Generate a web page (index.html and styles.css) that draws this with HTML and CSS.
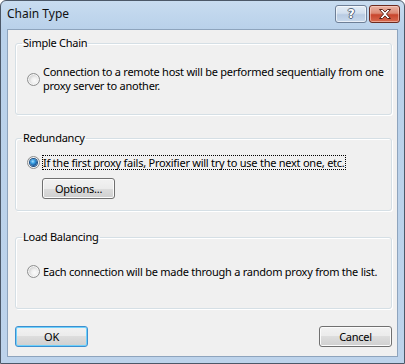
FILE: index.html
```html
<!DOCTYPE html>
<html lang="en">
<head>
    <meta charset="UTF-8">
    <meta name="viewport" content="width=device-width, initial-scale=1.0">
    <title>Chain Type</title>
    <link rel="stylesheet" href="styles.css">
</head>
<body>
    <div class="window">
        <div class="titlebar">
            <span class="title">Chain Type</span>
            <div class="caption-buttons">
                <span class="cap-btn help"><span class="help-glyph">?</span></span>
                <span class="cap-btn close">
                    <svg width="14" height="10" viewBox="0 0 14 10">
                        <path d="M1.5 0.5h3l2.5 2.6 2.5-2.6h3l-4 4.5 4 4.5h-3l-2.5-2.6-2.5 2.6h-3l4-4.5z" fill="#fff" stroke="#5a2317" stroke-width="1" stroke-linejoin="round"/>
                    </svg>
                </span>
            </div>
        </div>

        <div class="client">
            <fieldset class="group group-simple">
                <legend>Simple Chain</legend>
                <label class="option">
                    <span class="radio"></span>
                    <span class="option-text multi">Connection to a remote host will be performed sequentially from one<br>proxy server to another.</span>
                </label>
            </fieldset>

            <fieldset class="group group-redundancy">
                <legend>Redundancy</legend>
                <label class="option">
                    <span class="radio checked"></span>
                    <span class="option-text focused">If the first proxy fails, Proxifier will try to use the next one, etc.</span>
                </label>
                <button class="btn options-btn">Options...</button>
            </fieldset>

            <fieldset class="group group-balance">
                <legend>Load Balancing</legend>
                <label class="option">
                    <span class="radio"></span>
                    <span class="option-text">Each connection will be made through a random proxy from the list.</span>
                </label>
            </fieldset>

            <div class="dialog-buttons">
                <button class="btn default">OK</button>
                <button class="btn">Cancel</button>
            </div>
        </div>
    </div>
</body>
</html>
```

FILE: styles.css
```css
* {
    box-sizing: border-box;
}
body {
    margin: 0;
    background-color: #ffffff;
    font-family: "Noto Sans", sans-serif;
    font-size: 11px;
    letter-spacing: -0.25px;
    color: #000000;
}
.window {
    width: 405px;
    height: 364px;
    border: 1px solid #4c5868;
    border-radius: 6px 6px 0 0;
    background: linear-gradient(#c8dcf0, #b9d1ea 28px, #bdd3eb);
    display: flex;
    flex-direction: column;
}
.titlebar {
    height: 28px;
    flex: none;
    display: flex;
    justify-content: space-between;
    padding: 0 4px 0 6px;
}
.title {
    font-size: 12px;
    letter-spacing: 0;
    line-height: 16px;
    margin-top: 5px;
    color: #111111;
}
.caption-buttons {
    display: flex;
    gap: 2px;
    margin-top: 4px;
}
.cap-btn {
    height: 18px;
    display: flex;
    align-items: center;
    justify-content: center;
    border-radius: 3px;
}
.help {
    width: 32px;
    border: 1px solid #6e7f97;
    background: linear-gradient(#e4edf7, #d2dfee 45%, #b8cbe2 55%, #c9d9ec);
    box-shadow: inset 0 0 0 1px rgba(255, 255, 255, 0.6);
}
.help-glyph {
    font-family: "DejaVu Sans", sans-serif;
    font-weight: bold;
    font-size: 12px;
    line-height: 12px;
    color: #ffffff;
    text-shadow: -1px 0 #55657a, 1px 0 #55657a, 0 -1px #55657a, 0 1px #55657a;
}
.close {
    width: 31px;
    border: 1px solid #6c2a1f;
    background: linear-gradient(#eab3a5, #dc8a74 45%, #c8462d 55%, #d86a4f);
    box-shadow: inset 0 0 0 1px rgba(255, 220, 210, 0.5);
}
.client {
    flex: 1;
    min-height: 0;
    margin: 0 6px 6px;
    background-color: #f0f0f0;
    border: 1px solid #8ea4bd;
    padding: 5px 5px 0 7px;
    display: flex;
    flex-direction: column;
}
.group {
    margin: 0;
    padding: 0;
    border: 1px solid #d5dfe5;
    border-radius: 3px;
    box-shadow: inset 1px 1px 0 #ffffff, 1px 1px 0 #ffffff;
}
.group legend {
    margin-left: 6px;
    padding: 0 1px;
    line-height: 16px;
}
.group-simple {
    padding: 14px 0 21px;
}
.group-redundancy {
    margin-top: 15px;
    padding: 10px 0 11px;
}
.group-balance {
    margin-top: 18px;
    padding: 20px 0 30px;
}
.option {
    display: flex;
    align-items: center;
    gap: 3px;
    margin-left: 11px;
    line-height: 13px;
}
.option-text {
    white-space: nowrap;
}
.option-text.multi {
    line-height: 14px;
}
.radio {
    position: relative;
    flex: none;
    width: 13px;
    height: 13px;
    border-radius: 50%;
    border: 1px solid #8e8f8f;
    background: radial-gradient(circle at 60% 60%, #fbfbfb 0, #f0f0f0 3px, #d3d3d3 6px);
    box-shadow: inset 0 0 0 1px #f6f6f6;
}
.radio.checked::after {
    content: "";
    position: absolute;
    left: 2px;
    top: 2px;
    width: 7px;
    height: 7px;
    border-radius: 50%;
    background: radial-gradient(circle at 40% 35%, #a6e0ff 0, #3aa0e4 2px, #1c5e9e 4px);
    box-shadow: 0 0 0 1px #1a4f85;
}
.focused {
    outline: 1px dotted #000000;
}
.btn {
    width: 73px;
    height: 21px;
    padding: 0;
    border: 1px solid #707070;
    border-radius: 3px;
    background: linear-gradient(#f2f2f2 0, #ebebeb 50%, #dddddd 50%, #cfcfcf 100%);
    box-shadow: inset 0 0 0 1px #fbfbfb;
    font: inherit;
    letter-spacing: inherit;
    color: #000000;
}
.options-btn {
    margin: 9px 0 0 26px;
    display: block;
}
.btn.default {
    border-color: #3c8fd0;
    box-shadow: inset 0 0 0 1px #6fd1fb;
}
.dialog-buttons {
    display: flex;
    justify-content: space-between;
    margin-top: 17px;
}
```
